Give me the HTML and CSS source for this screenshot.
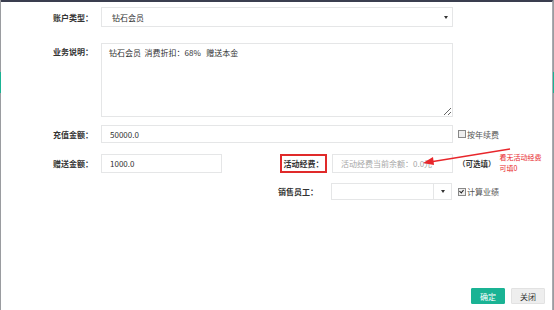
FILE: index.html
```html
<!DOCTYPE html>
<html lang="zh-CN">
<head>
    <meta charset="UTF-8">
    <title>充值</title>
    <link rel="stylesheet" href="styles.css">
</head>
<body>
    <div class="modal">
        <div class="form">
            <div class="row row-type">
                <label class="label">账户类型：</label>
                <div class="select wide">
                    <span>钻石会员</span>
                    <span class="caret"></span>
                </div>
            </div>
            <div class="row row-desc">
                <label class="label">业务说明：</label>
                <textarea class="textarea">钻石会员  消费折扣：68%   赠送本金</textarea>
            </div>
            <div class="row row-amount">
                <label class="label">充值金额：</label>
                <input class="input wide" value="50000.0">
                <span class="check"><i class="box"></i>按年续费</span>
            </div>
            <div class="row row-gift">
                <label class="label">赠送金额：</label>
                <input class="input short" value="1000.0">
                <span class="fee-label">活动经费：</span>
                <input class="input short" placeholder="活动经费当前余额：0.0元">
                <span class="optional">（可选填）</span>
                <span class="note">看无活动经费<br>可填0</span>
                <svg class="arrow" width="90" height="20" viewBox="0 0 90 20">
                    <line x1="88" y1="2" x2="8" y2="15" stroke="#e8262b" stroke-width="1.5"/>
                    <polygon points="1,16 11,10 12,18" fill="#e8262b"/>
                </svg>
            </div>
            <div class="row row-staff">
                <label class="staff-label">销售员工：</label>
                <div class="select short combo">
                    <span></span>
                    <span class="combo-btn"><span class="caret"></span></span>
                </div>
                <span class="check"><i class="box checked"></i>计算业绩</span>
            </div>
        </div>
        <div class="footer">
            <button class="btn btn-primary">确定</button>
            <button class="btn btn-default">关闭</button>
        </div>
    </div>
</body>
</html>
```

FILE: styles.css
```css
html, body {
    margin: 0;
    height: 100%;
}
body {
    font-family: "Noto Sans CJK SC", "Liberation Sans", sans-serif;
    font-size: 8px;
    color: #333;
    padding-left: 1px;
    box-sizing: border-box;
    background: linear-gradient(to bottom, #9a9ca0 72px, #1ab394 72px, #1ab394 93px, #9a9ca0 93px);
}
.modal {
    width: 552px;
    height: 310px;
    box-sizing: border-box;
    background: #fff;
    border-top: 2px solid #3a3e4f;
    border-right: 1px solid #a9abb0;
    display: flex;
    flex-direction: column;
}
.form {
    padding-top: 5px;
}
.row {
    display: flex;
    align-items: center;
    position: relative;
}
.label {
    width: 100px;
    padding-right: 8px;
    box-sizing: border-box;
    text-align: right;
    font-weight: 600;
    color: #333;
}
.input, .select, .textarea {
    box-sizing: border-box;
    border: 1px solid #e5e6e7;
    background: #fff;
    font-family: inherit;
    font-size: 8px;
    color: #333;
    margin: 0;
    outline: none;
}
.input {
    padding: 0 8px;
}
.input::placeholder {
    color: #a6a6a6;
}
.wide {
    width: 352px;
}
.short {
    width: 121px;
}
.select {
    display: flex;
    align-items: center;
    justify-content: space-between;
    padding: 0 0 0 10px;
}
.caret {
    width: 0;
    height: 0;
    border-left: 2px solid transparent;
    border-right: 2px solid transparent;
    border-top: 3px solid #333;
    margin-right: 4px;
}
.row-type .select {
    height: 20px;
}
.row-desc {
    margin-top: 16px;
    align-items: flex-start;
}
.row-desc .label {
    padding-top: 3px;
}
.textarea {
    width: 352px;
    height: 74px;
    padding: 3px 7px;
    line-height: 12px;
}
.row-amount {
    margin-top: 8px;
}
.row-amount .input {
    height: 18px;
}
.check {
    display: flex;
    align-items: center;
    margin-left: 5px;
    color: #555;
}
.box {
    width: 6px;
    height: 6px;
    border: 1px solid #888;
    margin-right: 1px;
    background: #eee;
    position: relative;
}
.box.checked::after {
    content: "";
    position: absolute;
    left: 1px;
    top: 0;
    width: 2px;
    height: 3px;
    border-right: 1px solid #222;
    border-bottom: 1px solid #222;
    transform: rotate(40deg);
}
.row-gift {
    margin-top: 9px;
}
.row-gift .input {
    height: 19px;
}
.fee-label {
    margin-left: 58px;
    width: 47px;
    height: 19px;
    box-sizing: border-box;
    border: 2px solid #e02a2a;
    display: flex;
    align-items: center;
    justify-content: center;
    font-weight: 600;
}
.fee-label + .input {
    margin-left: 5px;
}
.optional {
    margin-left: 5px;
    font-weight: 700;
    font-size: 7.5px;
}
.note {
    margin-left: 4px;
    color: #e8262b;
    font-size: 7px;
    line-height: 11px;
}
.arrow {
    position: absolute;
    left: 421px;
    top: -5px;
}
.row-staff {
    margin-top: 9px;
}
.staff-label {
    margin-left: 277px;
    width: 53px;
    font-weight: 600;
}
.combo {
    height: 17px;
    padding: 0;
    align-items: stretch;
}
.combo-btn {
    width: 17px;
    border-left: 1px solid #e5e6e7;
    display: flex;
    align-items: center;
    justify-content: center;
}
.combo-btn .caret {
    margin: 0;
}
.row-staff .check {
    margin-left: 6px;
}
.footer {
    margin-top: auto;
    display: flex;
    justify-content: flex-end;
    gap: 6px;
    padding: 0 7px 6px 0;
}
.btn {
    font-family: inherit;
    font-size: 8px;
    height: 16px;
    width: 34px;
    padding: 0;
    border-radius: 1px;
    box-sizing: border-box;
}
.btn-primary {
    background: #1ab394;
    border: 1px solid #1ab394;
    color: #fff;
}
.btn-default {
    background: #eeeeee;
    border: 1px solid #e2e2e2;
    color: #333;
}
```
